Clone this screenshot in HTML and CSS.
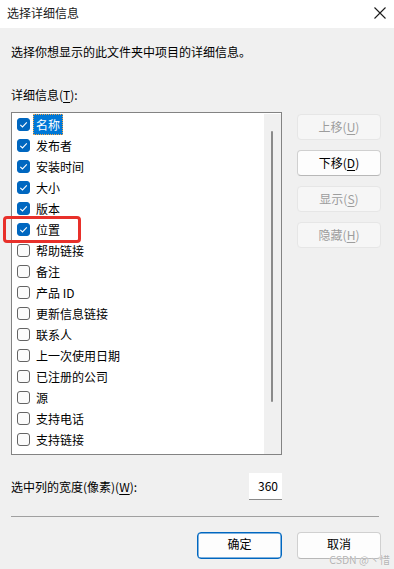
FILE: index.html
```html
<!DOCTYPE html>
<html lang="zh-CN">
<head>
<meta charset="utf-8">
<title>选择详细信息</title>
<link rel="stylesheet" href="styles.css">
</head>
<body>
<div class="window">
  <div class="titlebar">
    <span class="title">选择详细信息</span>
    <svg class="close" width="12" height="12" viewBox="0 0 12 12"><path d="M0.5 0.5 L11.5 11.5 M11.5 0.5 L0.5 11.5" stroke="#1b1b1b" stroke-width="1.1" fill="none"/></svg>
  </div>
  <div class="content">
    <div class="desc">选择你想显示的此文件夹中项目的详细信息。</div>
    <div class="label">详细信息(<u>T</u>):</div>
    <div class="main">
      <div class="list">
        <div class="items">
          <div class="row"><span class="cb on"><svg viewBox="0 0 13 13"><path d="M3.3 6.8 L5.5 9 L9.8 4.4" stroke="#fff" stroke-width="1.1" fill="none"/></svg></span><span class="txt sel">名称</span></div>
          <div class="row"><span class="cb on"><svg viewBox="0 0 13 13"><path d="M3.3 6.8 L5.5 9 L9.8 4.4" stroke="#fff" stroke-width="1.1" fill="none"/></svg></span><span class="txt">发布者</span></div>
          <div class="row"><span class="cb on"><svg viewBox="0 0 13 13"><path d="M3.3 6.8 L5.5 9 L9.8 4.4" stroke="#fff" stroke-width="1.1" fill="none"/></svg></span><span class="txt">安装时间</span></div>
          <div class="row"><span class="cb on"><svg viewBox="0 0 13 13"><path d="M3.3 6.8 L5.5 9 L9.8 4.4" stroke="#fff" stroke-width="1.1" fill="none"/></svg></span><span class="txt">大小</span></div>
          <div class="row"><span class="cb on"><svg viewBox="0 0 13 13"><path d="M3.3 6.8 L5.5 9 L9.8 4.4" stroke="#fff" stroke-width="1.1" fill="none"/></svg></span><span class="txt">版本</span></div>
          <div class="row"><span class="cb on"><svg viewBox="0 0 13 13"><path d="M3.3 6.8 L5.5 9 L9.8 4.4" stroke="#fff" stroke-width="1.1" fill="none"/></svg></span><span class="txt">位置</span></div>
          <div class="row"><span class="cb"></span><span class="txt">帮助链接</span></div>
          <div class="row"><span class="cb"></span><span class="txt">备注</span></div>
          <div class="row"><span class="cb"></span><span class="txt">产品 ID</span></div>
          <div class="row"><span class="cb"></span><span class="txt">更新信息链接</span></div>
          <div class="row"><span class="cb"></span><span class="txt">联系人</span></div>
          <div class="row"><span class="cb"></span><span class="txt">上一次使用日期</span></div>
          <div class="row"><span class="cb"></span><span class="txt">已注册的公司</span></div>
          <div class="row"><span class="cb"></span><span class="txt">源</span></div>
          <div class="row"><span class="cb"></span><span class="txt">支持电话</span></div>
          <div class="row"><span class="cb"></span><span class="txt">支持链接</span></div>
        </div>
        <div class="scroll"><div class="thumb"></div></div>
      </div>
      <div class="side">
        <div class="btn disabled">上移(<u>U</u>)</div>
        <div class="btn">下移(<u>D</u>)</div>
        <div class="btn disabled">显示(<u>S</u>)</div>
        <div class="btn disabled">隐藏(<u>H</u>)</div>
      </div>
    </div>
    <div class="widthrow">
      <span>选中列的宽度(像素)(<u>W</u>):</span>
      <div class="input">360</div>
    </div>
    <div class="sep"></div>
    <div class="actions">
      <div class="btn wide primary">确定</div>
      <div class="btn wide">取消</div>
    </div>
  </div>
  <div class="redbox"></div>
  <div class="watermark">CSDN @丶惜</div>
</div>
</body>
</html>
```

FILE: styles.css
```css
* { box-sizing: border-box; }
html, body {
  margin: 0;
  padding: 0;
}
body {
  width: 394px;
  height: 569px;
  overflow: hidden;
  background: #f0f0f0;
  font-family: "Noto Sans CJK SC", "Noto Sans", sans-serif;
  font-size: 12px;
  color: #000;
}
.window {
  position: relative;
  width: 394px;
  height: 569px;
  background: #f0f0f0;
}
.titlebar {
  height: 28px;
  background: #fff;
  display: flex;
  align-items: center;
  justify-content: space-between;
  padding: 0 8px 2px 7px;
}
.title { line-height: 16px; color: #1a1a1a; }
.close { display: block; }
.content {
  padding: 0 13px 0 11px;
}
.desc {
  margin-top: 16px;
  line-height: 16px;
}
.label {
  margin-top: 27px;
  line-height: 16px;
}
u { text-decoration-thickness: 1px; text-underline-offset: 2px; }
.main {
  margin-top: 9px;
  display: flex;
  gap: 15px;
}
.list {
  width: 271px;
  height: 343px;
  border: 1px solid #838383;
  background: #fff;
  display: flex;
}
.items {
  flex: 1;
  padding-top: 1px;
}
.row {
  height: 21px;
  display: flex;
  align-items: center;
  padding-left: 5px;
}
.cb {
  width: 13px;
  height: 13px;
  border: 1px solid #646464;
  border-radius: 3px;
  background: #fbfbfb;
  flex: none;
}
.cb.on {
  background: #0067c0;
  border-color: #0067c0;
}
.cb svg { display: block; width: 13px; height: 13px; margin: -1px; }
.txt {
  margin-left: 3px;
  padding: 0 2px;
  line-height: 19px;
  border: 1px solid transparent;
  white-space: nowrap;
}
.sel {
  background: #0078d7;
  color: #fff;
  border: 1px dotted #f2a54a;
}
.scroll {
  width: 17px;
  margin-top: 1px;
  background: #f0f0f0;
  padding-top: 17px;
  padding-left: 7px;
}
.thumb {
  width: 2px;
  height: 271px;
  background: #8a8a8a;
  border-radius: 1px;
}
.side {
  margin-top: 2px;
  display: flex;
  flex-direction: column;
  gap: 10px;
}
.btn {
  width: 84px;
  height: 26px;
  border: 1px solid #d0d0d0;
  border-bottom-color: #b8b8b8;
  border-radius: 4px;
  background: #fdfdfd;
  display: flex;
  align-items: center;
  justify-content: center;
  line-height: 12px;
}
.btn.disabled {
  background: #f6f6f6;
  border-color: #e6e6e6;
  color: #9d9d9d;
}
.widthrow {
  width: 271px;
  margin-top: 18px;
  display: flex;
  align-items: center;
  justify-content: space-between;
}
.input {
  width: 33px;
  height: 27px;
  background: #fff;
  border-bottom: 1px solid #8a8a8a;
  text-align: right;
  padding-right: 4px;
  line-height: 25px;
}
.sep {
  margin-top: 16px;
  width: 368px;
  height: 1px;
  background: #a0a0a0;
}
.actions {
  margin-top: 15px;
  display: flex;
  justify-content: flex-end;
  gap: 15px;
}
.btn.wide {
  width: 85px;
  height: 27px;
  padding-bottom: 3px;
}
.btn.wide + .btn.wide { width: 84px; }
.btn.primary {
  border: 1px solid #0067c0;
  box-shadow: inset 0 0 0 0.5px #0067c0;
}
.redbox {
  position: absolute;
  left: 3px;
  top: 216px;
  width: 78px;
  height: 27px;
  border: 3px solid #e8302a;
  border-radius: 4px;
}
.watermark {
  position: absolute;
  right: 4px;
  top: 555px;
  font-size: 10.5px;
  line-height: 9px;
  color: #b4b4b4;
  text-shadow: 0 0 1px #fff;
}
```
